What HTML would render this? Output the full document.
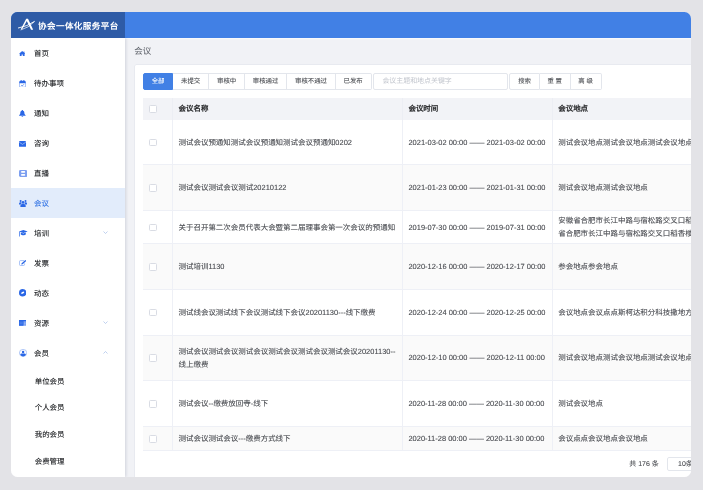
<!DOCTYPE html>
<html lang="zh-CN">
<head>
<meta charset="utf-8">
<title>协会一体化服务平台</title>
<style>
*{box-sizing:border-box;margin:0;padding:0}
html,body{width:703px;height:490px;overflow:hidden}
body{text-rendering:geometricPrecision;background:#e3e3e7;font-family:"Liberation Sans",sans-serif;color:#606266;position:relative}
.win{will-change:transform;position:absolute;left:11px;top:12px;width:680.3px;height:465px;border-radius:6.5px;overflow:hidden;background:#f1f2f6}
.topbar{position:absolute;left:0;top:0;width:100%;height:26px;background:#4180e5}
.brand{position:absolute;left:0;top:0;width:114.4px;height:26px;background:#2e5ba6;color:#fff;z-index:3}
.brand svg{position:absolute;left:6px;top:6px;width:19px;height:13px}
.brand span{position:absolute;left:27px;top:0;line-height:28.6px;font-size:8.54px;font-weight:bold;letter-spacing:.43px;white-space:nowrap}
.side{position:absolute;left:0;top:26px;width:114.3px;height:439px;background:#fff;box-shadow:1px 0 3px rgba(0,21,61,.14);z-index:2}
.mi{position:relative;height:29.97px;line-height:31.6px;font-size:7.48px;color:#2a2c2f;text-shadow:0 0 .5px rgba(42,44,47,.55);padding-left:23px;white-space:nowrap}
.mi svg.ic{position:absolute}
.mi svg.ar{position:absolute;left:91.5px;top:12.5px;width:5px;height:5px}
.mi.on{background:#e2ecfb;color:#3a79e6;text-shadow:0 0 .5px rgba(58,121,230,.55)}
.sub{height:26.7px;line-height:28.3px;font-size:7.48px;color:#2a2c2f;text-shadow:0 0 .5px rgba(42,44,47,.55);padding-left:23.7px;white-space:nowrap}
.main{position:absolute;left:114px;top:26px;right:0;bottom:0;box-shadow:inset 0 1.2px 0 #f8f9fb}
.ptitle{position:absolute;left:9.3px;top:0;height:25.5px;line-height:27.2px;font-size:8.54px;color:#5a5e66}
.card{position:absolute;left:9.3px;top:25.7px;width:600px;height:460px;background:#fff;border-radius:2.5px;box-shadow:inset 0 0 0 1px #e8eaf0}
.tabs{position:absolute;left:8.8px;top:9.3px;height:17px;display:flex;font-size:6.4px;line-height:16.4px;white-space:nowrap}
.tabs div{border:1px solid #e3e6ec;border-left:0;background:#fff;color:#55575c;text-shadow:0 0 .5px rgba(85,87,92,.5);text-align:center;height:17px}
.tabs div:first-child{background:#4180e5;border-color:#4180e5;color:#fff;text-shadow:0 0 .5px rgba(255,255,255,.5);border-radius:2px 0 0 2px;border-left:1px solid #4180e5}
.tabs div:last-child{border-radius:0 2px 2px 0}
.search{position:absolute;left:239.1px;top:9.3px;width:134.3px;height:17px;border:1px solid #e3e6ec;border-radius:2px;font-size:6.94px;line-height:16.2px;color:#c0c4cc;padding-left:8px;white-space:nowrap}
.btns{position:absolute;left:375.1px;top:9.3px;height:17px;display:flex;font-size:6.4px;line-height:16.4px;color:#55575c;text-shadow:0 0 .5px rgba(85,87,92,.5);white-space:nowrap}
.btns div{border:1px solid #e3e6ec;border-left:0;text-align:center;height:17px;background:#fff}
.btns div:first-child{border-left:1px solid #e3e6ec;border-radius:2px 0 0 2px}
.btns div:last-child{border-radius:0 2px 2px 0}
.tbl{position:absolute;left:8.75px;top:34.1px;width:620px;font-size:7.48px;color:#55575c;text-shadow:0 0 .5px rgba(85,87,92,.55)}
.tr{position:relative;display:flex;border-bottom:1px solid #eef0f6;background:#fff}
.tr.s{background:#fafafa}
.tr.h{background:#f2f3f7;color:#303133;font-weight:bold;border-bottom:0}
.td{border-right:1px solid #eef0f6;padding-left:5.3px;padding-top:2px;display:flex;align-items:center;line-height:12.9px;white-space:nowrap;overflow:hidden;height:100%}
.tr.h .td{border-right-color:#eceef4}
.c0{width:30.2px;padding-left:6px;padding-top:.8px;padding-bottom:0}
.c1{width:229.9px}
.c2{width:149.6px}
.c3{width:210px;border-right:0;padding-left:5.5px}
.tr.last .td{padding-top:3.4px}
.tr.last .c0{padding-top:2px;padding-bottom:0}
.tr.h .c0{padding-top:.6px;padding-bottom:0}
.cb{width:7.8px;height:7.8px;border:1px solid #d9dce4;border-radius:1.4px;background:#fff;display:block}
.pg{position:absolute;left:484px;top:380px;font-size:6.94px;line-height:14px;color:#55575c;text-shadow:0 0 .5px rgba(85,87,92,.5);white-space:nowrap}
.sel{position:absolute;left:532.5px;top:393.2px;width:60px;height:14.2px;border:1px solid #e3e6ec;border-radius:2px;font-size:6.94px;line-height:13.9px;padding-left:10.3px;color:#55575c;text-shadow:0 0 .5px rgba(85,87,92,.5);white-space:nowrap}
</style>
</head>
<body>
<div class="win">
  <div class="topbar"></div>
  <div class="brand">
    <svg viewBox="0 0 190 130"><path d="M92 8 L110 8 L162 117 L140 117 L98 30 L52 112 L38 112 Z" fill="#fff"/><path d="M14 100 Q104 84 174 35" fill="none" stroke="#fff" stroke-width="9" stroke-linecap="round"/><path d="M40 119 Q118 97 170 41" fill="none" stroke="#fff" stroke-width="7" stroke-linecap="round"/></svg>
    <span>协会一体化服务平台</span>
  </div>
  <div class="side">
    <div class="mi"><svg class="ic" style="left:8.1px;top:13.1px;width:6.4px;height:5.3px" viewBox="0 0 64 53" preserveAspectRatio="none"><path d="M32 0 L0 27 L8 27 L8 53 L26 53 L26 34 L38 34 L38 53 L56 53 L56 27 L64 27 L54 18.5 L54 4 L46 4 L46 12 Z" fill="#2a67e6"/></svg>首页</div>
    <div class="mi"><svg class="ic" style="left:7.9px;top:11.9px;width:7px;height:7.6px" viewBox="0 0 70 76" preserveAspectRatio="none"><rect x="4" y="10" width="62" height="62" rx="12" fill="#fff" stroke="#7ea4f2" stroke-width="7"/><path d="M4 22 C4 14 10 10 16 10 H54 C60 10 66 14 66 22 V32 H4Z" fill="#2a67e6"/><rect x="17" y="0" width="9" height="18" rx="4" fill="#2a67e6"/><rect x="44" y="0" width="9" height="18" rx="4" fill="#2a67e6"/><path d="M22 52 L32 60 L49 43" fill="none" stroke="#2a67e6" stroke-width="7"/></svg>待办事项</div>
    <div class="mi"><svg class="ic" style="left:8.1px;top:12.3px;width:6.7px;height:6.8px" viewBox="0 0 67 68" preserveAspectRatio="none"><path d="M33.5 0 C28 0 27 5 27 7 C17 10 13 19 13 30 C13 42 8 47 1 53 L1 57 L66 57 L66 53 C59 47 54 42 54 30 C54 19 50 10 40 7 C40 5 39 0 33.5 0Z M24 60 L43 60 C43 65 39 68 33.5 68 C28 68 24 65 24 60Z" fill="#2a67e6"/></svg>通知</div>
    <div class="mi"><svg class="ic" style="left:8.1px;top:13px;width:7px;height:5.8px" viewBox="0 0 70 58" preserveAspectRatio="none"><rect x="0" y="0" width="70" height="58" rx="5" fill="#2a67e6"/><path d="M2 12 L35 34 L68 12" fill="none" stroke="#c9dafa" stroke-width="6"/></svg>咨询</div>
    <div class="mi"><svg class="ic" style="left:7.7px;top:12.3px;width:8.2px;height:7px" viewBox="0 0 82 70" preserveAspectRatio="none"><rect x="0" y="0" width="82" height="70" rx="14" fill="#7d9ff0"/><rect x="20" y="11" width="42" height="17" rx="8" fill="#fff"/><rect x="20" y="41" width="42" height="17" rx="8" fill="#fff"/></svg>直播</div>
    <div class="mi on"><svg class="ic" style="left:7.8px;top:11.7px;width:8.1px;height:7.3px" viewBox="0 0 81 73" preserveAspectRatio="none"><circle cx="16" cy="11" r="10" fill="#2a67e6"/><circle cx="65" cy="11" r="10" fill="#2a67e6"/><circle cx="40.5" cy="24" r="13" fill="#2a67e6"/><path d="M0 40 C0 27 6 22 16 22 C22 22 25 24 28 27 C24 32 22 38 22 46 L0 46Z M81 40 C81 27 75 22 65 22 C59 22 56 24 53 27 C57 32 59 38 59 46 L81 46Z" fill="#2a67e6"/><path d="M14 73 L14 60 C14 46 24 40 40.5 40 C57 40 67 46 67 60 L67 73Z" fill="#2a67e6"/></svg>会议</div>
    <div class="mi"><svg class="ic" style="left:8.1px;top:12.4px;width:8.7px;height:6.5px" viewBox="0 0 87 65" preserveAspectRatio="none"><path d="M43 0 L87 14 L43 30 L0 14Z" fill="#2a67e6"/><path d="M18 26 L43 36 L68 26 L68 44 C58 54 28 54 18 44Z" fill="#2a67e6"/><path d="M5 16 V65" stroke="#2a67e6" stroke-width="7"/></svg>培训<svg class="ar" viewBox="0 0 10 10"><path d="M1 3L5 7L9 3" fill="none" stroke="#a4bdea" stroke-width="1.4"/></svg></div>
    <div class="mi"><svg class="ic" style="left:7.7px;top:12.1px;width:7.4px;height:5.9px" viewBox="0 0 74 59" preserveAspectRatio="none"><path d="M52 6 H14 C8 6 4 10 4 16 V45 C4 51 8 55 14 55 H46 C52 55 56 51 56 45 V34" fill="none" stroke="#7ea4f2" stroke-width="7"/><path d="M64 0 L74 9 L36 42 L22 46 L26 33Z" fill="#2a67e6"/></svg>发票</div>
    <div class="mi"><svg class="ic" style="left:7.9px;top:11.5px;width:7.4px;height:7.5px" viewBox="0 0 74 75" preserveAspectRatio="none"><ellipse cx="37" cy="37.5" rx="37" ry="37.5" fill="#2a67e6"/><ellipse cx="37" cy="37.5" rx="17" ry="9" transform="rotate(-28 37 37.5)" fill="#fff"/></svg>动态</div>
    <div class="mi"><svg class="ic" style="left:8.1px;top:12.3px;width:7.2px;height:5.7px" viewBox="0 0 72 57" preserveAspectRatio="none"><rect x="0" y="0" width="72" height="57" fill="#5f8def"/><rect x="0" y="0" width="72" height="11" fill="#2a67e6"/><rect x="0" y="0" width="44" height="57" fill="#2a67e6"/><path d="M6 22 H38 M6 38 H38" stroke="#6f99f0" stroke-width="6"/><path d="M48 22 H68 M48 36 H68 M48 49 H68" stroke="#bdd0f8" stroke-width="6"/></svg>资源<svg class="ar" viewBox="0 0 10 10"><path d="M1 3L5 7L9 3" fill="none" stroke="#a4bdea" stroke-width="1.4"/></svg></div>
    <div class="mi"><svg class="ic" style="left:7.5px;top:11.4px;width:8.2px;height:7.8px" viewBox="0 0 82 78" preserveAspectRatio="none"><ellipse cx="41" cy="39" rx="37" ry="35" fill="#fff" stroke="#7ea4f2" stroke-width="6"/><circle cx="41" cy="30" r="12" fill="#2a67e6"/><path d="M12 52 C20 46 30 46 41 46 C52 46 62 46 70 52 C64 68 52 74 41 74 C30 74 18 68 12 52Z" fill="#2a67e6"/></svg>会员<svg class="ar" viewBox="0 0 10 10"><path d="M1 7L5 3L9 7" fill="none" stroke="#a4bdea" stroke-width="1.4"/></svg></div>
    <div class="sub">单位会员</div>
    <div class="sub">个人会员</div>
    <div class="sub">我的会员</div>
    <div class="sub">会费管理</div>
  </div>
  <div class="main">
    <div class="ptitle">会议</div>
    <div class="card">
      <div class="tabs">
        <div style="width:29.9px">全部</div><div style="width:36.3px">未提交</div><div style="width:35.7px">审核中</div><div style="width:42.2px">审核通过</div><div style="width:48.7px">审核不通过</div><div style="width:35.7px">已发布</div>
      </div>
      <div class="search">会议主题和地点关键字</div>
      <div class="btns"><div style="width:30.4px">搜索</div><div style="width:30.9px">重 置</div><div style="width:30.9px">高 级</div></div>
      <div class="tbl">
        <div class="tr h" style="height:22.2px"><div class="td c0"><i class="cb"></i></div><div class="td c1">会议名称</div><div class="td c2">会议时间</div><div class="td c3">会议地点</div></div>
        <div class="tr" style="height:45.2px"><div class="td c0"><i class="cb"></i></div><div class="td c1">测试会议预通知测试会议预通知测试会议预通知0202</div><div class="td c2">2021-03-02 00:00 —— 2021-03-02 00:00</div><div class="td c3">测试会议地点测试会议地点测试会议地点测试会议地点</div></div>
        <div class="tr s" style="height:45.9px"><div class="td c0"><i class="cb"></i></div><div class="td c1">测试会议测试会议测试20210122</div><div class="td c2">2021-01-23 00:00 —— 2021-01-31 00:00</div><div class="td c3">测试会议地点测试会议地点</div></div>
        <div class="tr" style="height:33.2px"><div class="td c0"><i class="cb"></i></div><div class="td c1">关于召开第二次会员代表大会暨第二届理事会第一次会议的预通知</div><div class="td c2">2019-07-30 00:00 —— 2019-07-31 00:00</div><div class="td c3">安徽省合肥市长江中路与宿松路交叉口稻香楼宾馆安徽<br>省合肥市长江中路与宿松路交叉口稻香楼宾馆</div></div>
        <div class="tr s" style="height:45.4px"><div class="td c0"><i class="cb"></i></div><div class="td c1">测试培训1130</div><div class="td c2">2020-12-16 00:00 —— 2020-12-17 00:00</div><div class="td c3">参会地点参会地点</div></div>
        <div class="tr" style="height:46px"><div class="td c0"><i class="cb"></i></div><div class="td c1">测试线会议测试线下会议测试线下会议20201130---线下缴费</div><div class="td c2">2020-12-24 00:00 —— 2020-12-25 00:00</div><div class="td c3">会议地点会议点点斯柯达积分科技撒地方撒旦发</div></div>
        <div class="tr s" style="height:45.4px"><div class="td c0"><i class="cb"></i></div><div class="td c1">测试会议测试会议测试会议测试会议测试会议测试会议20201130--<br>线上缴费</div><div class="td c2">2020-12-10 00:00 —— 2020-12-11 00:00</div><div class="td c3">测试会议地点测试会议地点测试会议地点测试会议地点</div></div>
        <div class="tr" style="height:45.7px"><div class="td c0"><i class="cb"></i></div><div class="td c1">测试会议--缴费放回寺-线下</div><div class="td c2">2020-11-28 00:00 —— 2020-11-30 00:00</div><div class="td c3">测试会议地点</div></div>
        <div class="tr s last" style="height:23.8px"><div class="td c0"><i class="cb"></i></div><div class="td c1">测试会议测试会议---缴费方式线下</div><div class="td c2">2020-11-28 00:00 —— 2020-11-30 00:00</div><div class="td c3">会议点点会议地点会议地点</div></div>
      </div>
      <div class="pg" style="left:495px;top:394px">共 176 条</div>
      <div class="sel">10条/页</div>
    </div>
  </div>
</div>
</body>
</html>
